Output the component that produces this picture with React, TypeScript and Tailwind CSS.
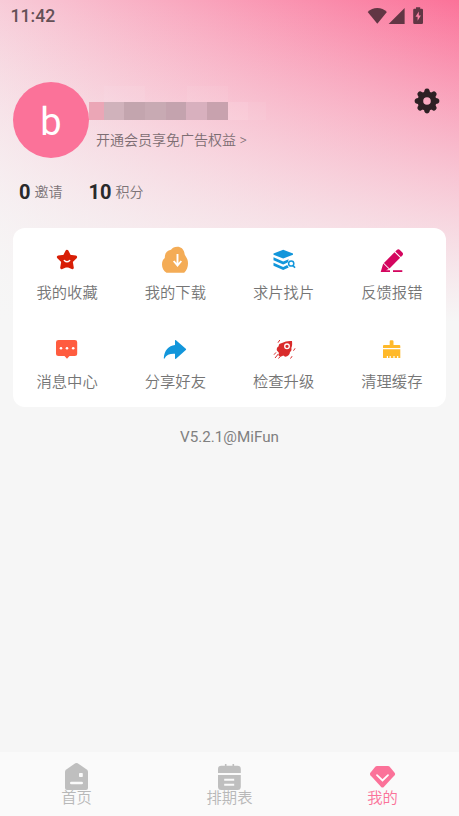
import React from 'react';

interface MenuItem {
  label: string;
  icon: React.ReactNode;
}

const StarIcon = () => (
  <svg width="30" height="30" viewBox="0 0 30 30">
    <path
      d="M15 6.3l2.6 5 6 .8-4.4 4.2 1.1 6.4-5.3-2.4-5.3 2.4 1.1-6.4-4.4-4.2 6-.8z"
      fill="#d81e06"
      stroke="#d81e06"
      strokeWidth="3"
      strokeLinejoin="round"
    />
    <path d="M12.3 15.4q2.700 2.600 5.400 0" fill="none" stroke="#fff" strokeWidth="1.4" strokeLinecap="round" />
  </svg>
);

const DownloadIcon = () => (
  <svg width="30" height="30" viewBox="0 0 30 30">
    <path
      d="M11 4.800C12.300 2.600 14.500 1.700 17.300 1.700c3.700 0 6.200 2.200 7 5.800.3 1.700.6 2.700 1.500 4 1.600 2.300 2.200 4.300 2.200 7 0 3.500-1.200 7-3.800 9.200H6.500C3.500 26 2 23 2 19.500c0-2.800.8-4.800 2.800-6.500C4.600 8.500 7 5.200 11 4.800z"
      fill="#f4ac56"
    />
    <path d="M17.500 9v11.500M13.700 16l3.800 4.600 3.800-4.600" fill="none" stroke="#fff" strokeWidth="1.900" />
  </svg>
);

const SearchStackIcon = () => (
  <svg width="30" height="30" viewBox="0.5 0 30 30">
    <g fill="#1296db">
      <path d="M14.700 4.800l9.800 3.600v1.400l-9.800 3.800L5 9.800V8.400z" />
      <path d="M5 12.300l9.700 4.200 5.500-2.300-1 3.200-4.500 2L5 15.200z" />
      <path d="M5 17.700l9.700 4.200 4-1.800 1.500 2.300-5.500 2.500L5 20.700z" />
    </g>
    <circle cx="22.700" cy="18.500" r="2.600" fill="#fff" stroke="#1296db" strokeWidth="1.500" />
    <path d="M24.500 20.500l2 2.300" stroke="#1296db" strokeWidth="1.700" />
  </svg>
);

const PencilIcon = () => (
  <svg width="30" height="30" viewBox="0 0 30 30">
    <g fill="#d4065f">
      <path d="M19.800 5q1.600-1.500 3.100 0l2.500 2.400q1.300 1.500 0 3.100L23.900 12l-5.600-5.500z" />
      <path d="M17.500 7.300l5.600 5.500-10.600 10.600-5.600-5.500z" />
      <path d="M6.200 18.600l5.600 5.500-2.800 1.100h4V27H3.700z" />
      <path d="M16 25.200h9.300V27H16z" />
    </g>
  </svg>
);

const MessageIcon = () => (
  <svg width="30" height="30" viewBox="0 0 30 30">
    <path
      d="M6.500 6h16.200q2.500 0 2.500 2.300v11.200q0 2.500-2.500 2.500h-5.200L15 24.800 12.500 22h-6Q4 22 4 19.500V8.300Q4 6 6.500 6z"
      fill="#ff5c3f"
    />
    <g fill="#fff">
      <circle cx="9" cy="14.300" r="1.300" />
      <circle cx="15" cy="14.300" r="1.300" />
      <circle cx="21.200" cy="14.300" r="1.300" />
    </g>
  </svg>
);

const ShareIcon = () => (
  <svg width="30" height="30" viewBox="0 0 30 30">
    <path
      d="M15 6.600q0-1.100 1-.4l9.800 8.500q.8.700 0 1.400L16 24.800q-1 .6-1-.5v-4.500c-5-.3-8.500 1-10.500 4.600-.3.500-.8.400-.7-.3C4.300 16.500 8.500 11.800 15 11z"
      fill="#1296db"
    />
  </svg>
);

const RocketIcon = () => (
  <svg width="30" height="30" viewBox="0 0 30 30">
    <path
      d="M23 7c.3 3 .3 5-.7 7 .5 1.500.2 3-1.300 4-.3 2.800-2 4.500-4.800 4.800l-2-1.200c-2 1.300-4 1-4.700-.3l.4-2.500-2-2.300c-.5-2 .2-3.500 1.800-4.300-.2-1.700 1-2.900 3.300-3.200C16 7.400 19.300 6.600 23 7z"
      fill="#d92b2b"
    />
    <circle cx="18" cy="12.300" r="2.300" fill="#d92b2b" stroke="#fff" strokeWidth="1.300" />
    <path
      d="M9 8.700L10.800 6M5 20.700l2-2.300M6 24l3.300-4M9.500 24.500l2-2.400M24.500 16.700l1.600-2.400M21.500 24.500l1.600-2.300"
      stroke="#d92b2b"
      strokeWidth="1"
    />
  </svg>
);

const BrushIcon = () => (
  <svg width="30" height="30" viewBox="0 0 30 30">
    <g fill="#ffb92a">
      <path d="M12.700 11V7.500q0-1.200 1.200-1.200h1.400q1.200 0 1.200 1.200V11h5.800q1 0 1 1v2H6v-2q0-1 1-1z" />
      <path d="M6 15.300h17.300V24h-2v-2h-1.200v2h-2.500v-2h-1.200v2h-2.600v-2h-1.200v2H11v-2H9.800v2H6z" />
    </g>
  </svg>
);

const GearIcon = () => (
  <svg width="26" height="26" viewBox="-13 -13 26 26" fill="#2e2024">
    <path fillRule="evenodd" d="M-9.500 0a9.500 9.500 0 1 0 19 0a9.500 9.500 0 1 0-19 0zM-3.800 0a3.800 3.800 0 1 1 7.600 0a3.800 3.800 0 1 1-7.600 0z" />
    {[0, 45, 90, 135, 180, 225, 270, 315].map((angle) => (
      <path key={angle} transform={`rotate(${angle})`} d="M-3.200-8l.8-3Q-1.800-12.400 0-12.400t2.400 1.400l.8 3z" />
    ))}
  </svg>
);

const StatusIcons = () => (
  <svg width="58" height="20" viewBox="367 5 58 20" fill="#613644">
    <path d="M377.300 22.800L367.700 11q4-4 9.600-4t9.600 4z" />
    <path d="M404.600 7v16h-16z" />
    <path
      fillRule="evenodd"
      d="M416 7.800V6.300h4.200v1.500h1.600q1.200 0 1.200 1.200v12.800q0 1.200-1.200 1.200h-7.400q-1.200 0-1.200-1.200V9q0-1.200 1.200-1.200zM418.800 10.500l-3.300 5.300h2.100v4l3.300-5.300h-2.100z"
    />
  </svg>
);

const HomeIcon = () => (
  <svg width="24" height="28" viewBox="0.5 0 24 28">
    <path d="M10.800 1.300q1.200-.8 2.400 0l9 6.200q1.300.9 1.300 2.300V26q0 2-2 2h-19q-2 0-2-2V9.800q0-1.400 1.300-2.300z" fill="#bfbfbf" />
    <rect x="14.500" y="11" width="3.800" height="4" rx=".8" fill="#fafafa" />
    <rect x="5.500" y="19.700" width="13" height="2.500" rx="1.200" fill="#fafafa" />
  </svg>
);

const CalendarIcon = () => (
  <svg width="24" height="28" viewBox="0.500 0 24 28">
    <g fill="#bfbfbf">
      <path d="M.5 11V7q0-3.300 3.300-3.300h3.600V2H9v1.700h6V2h1.600v1.700H20q3.300 0 3.300 3.300v4z" />
      <path d="M.5 13h22.800v11.500Q23.300 28 20 28H3.800Q.5 28 .5 24.500z" />
    </g>
    <path d="M6.700 17.800h10M6.700 22.800h10" stroke="#fafafa" strokeWidth="2" />
  </svg>
);

const DiamondIcon = () => (
  <svg width="26" height="28" viewBox="0.500 0 26 28">
    <path d="M7.500 4h11q1 0 1.700.7l4.900 6q1 1.300 0 2.600L14.300 25q-1.300 1.200-2.600 0L.9 13.300q-1-1.300 0-2.600l4.900-6Q6.500 4 7.500 4z" fill="#fb7299" />
    <path d="M7.500 13.200l5.500 5.300 5.500-5.300" fill="none" stroke="#fff" strokeWidth="1.800" strokeLinecap="round" />
  </svg>
);

const menuItems: MenuItem[] = [
  { label: '我的收藏', icon: <StarIcon /> },
  { label: '我的下载', icon: <DownloadIcon /> },
  { label: '求片找片', icon: <SearchStackIcon /> },
  { label: '反馈报错', icon: <PencilIcon /> },
  { label: '消息中心', icon: <MessageIcon /> },
  { label: '分享好友', icon: <ShareIcon /> },
  { label: '检查升级', icon: <RocketIcon /> },
  { label: '清理缓存', icon: <BrushIcon /> },
];

const tabs = [
  { label: '首页', icon: <HomeIcon />, active: false },
  { label: '排期表', icon: <CalendarIcon />, active: false },
  { label: '我的', icon: <DiamondIcon />, active: true },
];

// Masked user name
const MaskedName = () => (
  <div className="w-[177px]">
    <div className="flex h-4">
      <div className="w-[15px]" />
      <div className="w-[41px] bg-white/5" />
      <div className="w-[42px]" />
      <div className="w-[41px] bg-white/5" />
      <div className="w-[38px]" />
    </div>
    <div className="flex h-[18px]">
      <div className="w-[15px] bg-[#eba6b6]" />
      <div className="w-5 bg-[#d0b2bb]" />
      <div className="w-[21px] bg-[#c3a5ae]" />
      <div className="w-[21px] bg-[#c8aab3]" />
      <div className="w-5 bg-[#c4a3ae]" />
      <div className="w-[21px] bg-[#d8b0be]" />
      <div className="w-[21px] bg-[#c8a2ae]" />
      <div className="w-5 bg-white/10" />
      <div className="w-[18px] bg-white/5" />
    </div>
  </div>
);

const App: React.FC = () => {
  return (
    <div className="flex h-[816px] w-[459px] flex-col overflow-hidden bg-[#f6f6f6] bg-[linear-gradient(to_bottom,#f6f6f600,#f6f6f6),linear-gradient(235.5deg,#fb7299,#f6f6f6)] bg-[length:459px_322px] bg-no-repeat font-['Roboto','Noto_Sans_CJK_SC',sans-serif]">
      <div className="flex h-8 items-center justify-between pl-[10.5px] pr-[34px]">
        <span className="text-[17.600px] font-medium leading-8 text-[#645056]">11:42</span>
        <StatusIcons />
      </div>

      <div className="flex h-[126px] items-start pl-[13px] pr-[19px] pt-[50px]">
        <div className="flex size-[76px] shrink-0 items-center justify-center rounded-full bg-[#fb7299] text-[38px] leading-none text-white">
          <span className="pt-1">b</span>
        </div>
        <div className="flex flex-1 flex-col pt-1">
          <MaskedName />
          <p className="pl-[7px] pt-[10px] text-[14px] font-[350] leading-5 text-[#7c6d72]">开通会员享免广告权益 &gt;</p>
        </div>
        <button className="mt-[6px]">
          <GearIcon />
        </button>
      </div>

      <div className="flex h-[70px] items-center gap-[26px] pb-[3px] pl-[19px]">
        <div className="flex items-center gap-1">
          <span className="text-[20px] font-bold leading-6 text-[#29292b]">0</span>
          <span className="text-[14px] font-[350] leading-6 text-[#7c7477]">邀请</span>
        </div>
        <div className="flex items-center gap-1">
          <span className="text-[20px] font-bold leading-6 text-[#29292b]">10</span>
          <span className="text-[14px] font-[350] leading-6 text-[#7c7477]">积分</span>
        </div>
      </div>

      <div className="mx-[13px] grid h-[179px] shrink-0 grid-cols-4 grid-rows-[89px_90px] rounded-xl bg-white">
        {menuItems.map((item) => (
          <div key={item.label} className="flex flex-col items-center pt-[17px]">
            {item.icon}
            <span className="mt-[6px] text-[15.300px] font-[350] leading-6 text-[#757575]">{item.label}</span>
          </div>
        ))}
      </div>

      <p className="pt-[18px] text-center text-[15.200px] leading-6 text-[#808080]">V5.2.1@MiFun</p>

      <nav className="mt-auto grid h-16 grid-cols-3 bg-[#fafafa]">
        {tabs.map((tab) => (
          <div key={tab.label} className="flex flex-col items-center pt-[10px]">
            {tab.icon}
            <span
              className={`-mt-[3px] text-[15.300px] font-[350] leading-[22px] ${tab.active ? 'text-[#fb7299]' : 'text-[#b8b8b8]'}`}
            >
              {tab.label}
            </span>
          </div>
        ))}
      </nav>
    </div>
  );
};

export default App;
